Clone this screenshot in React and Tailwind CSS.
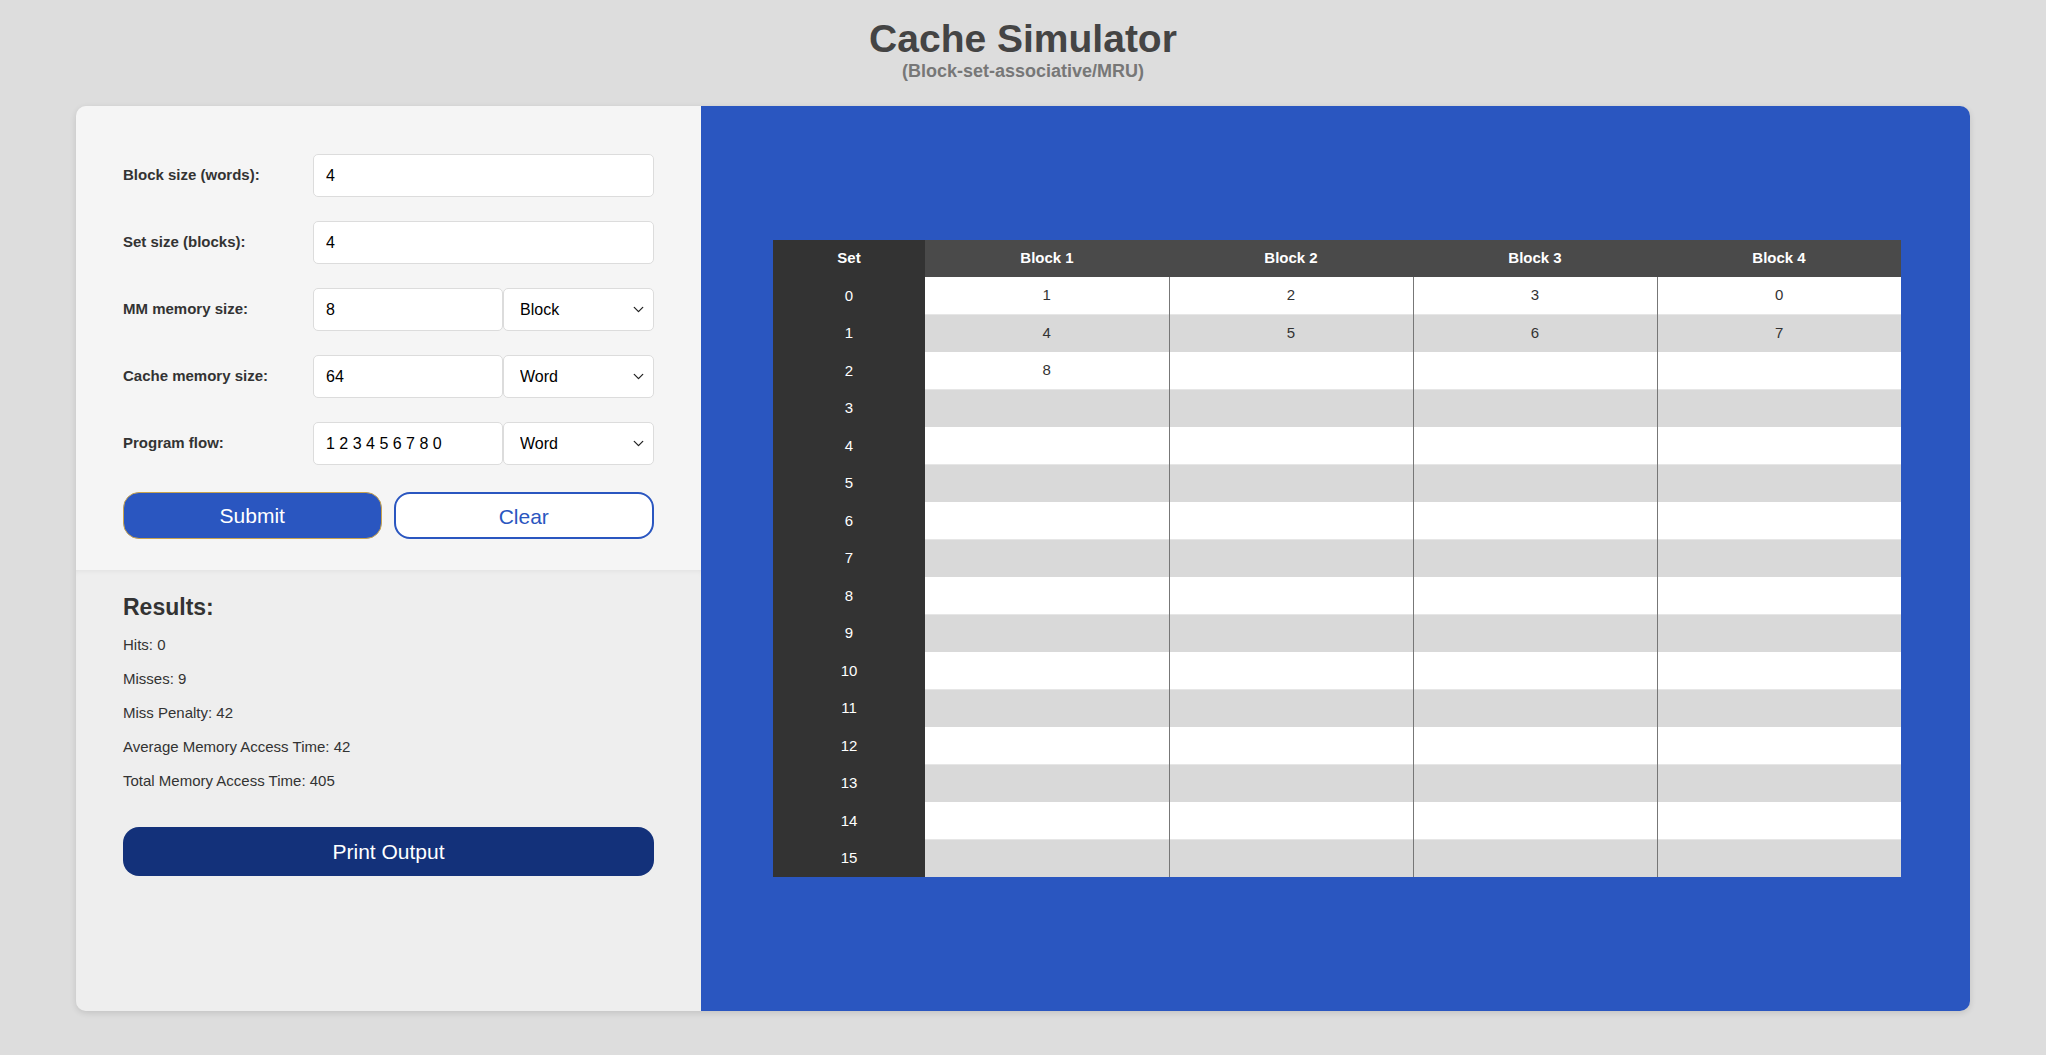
import { ChevronDown } from 'lucide-react';

const fields = [
  { label: 'Block size (words):', value: '4' },
  { label: 'Set size (blocks):', value: '4' },
  { label: 'MM memory size:', value: '8', unit: 'Block' },
  { label: 'Cache memory size:', value: '64', unit: 'Word' },
  { label: 'Program flow:', value: '1 2 3 4 5 6 7 8 0', unit: 'Word' },
];

const results = [
  'Hits: 0',
  'Misses: 9',
  'Miss Penalty: 42',
  'Average Memory Access Time: 42',
  'Total Memory Access Time: 405',
];

// cache contents per set (MRU placement)
const cache = [
  ['1', '2', '3', '0'],
  ['4', '5', '6', '7'],
  ['8', '', '', ''],
];

function Field({ label, value, unit }) {
  return (
    <div className="flex items-center h-[43px]">
      <label className="w-[190px] shrink-0 text-[15px] font-bold text-[#333]">{label}</label>
      <div className="flex flex-1 h-full">
        <input
          readOnly
          value={value}
          className={`h-full ${unit ? 'w-[190px]' : 'flex-1'} bg-white border border-[#dcdcdc] rounded-[5px] px-[12px] text-[16px] text-black outline-none`}
        />
        {unit && (
          <div className="relative flex-1 h-full">
            <select
              defaultValue={unit}
              className="appearance-none w-full h-full bg-white border border-[#dcdcdc] rounded-[5px] pl-[16px] text-[16px] text-black outline-none"
            >
              <option>Block</option>
              <option>Word</option>
            </select>
            <ChevronDown size={17} strokeWidth={1.8} className="absolute right-[7px] top-[13px] text-[#222] pointer-events-none" />
          </div>
        )}
      </div>
    </div>
  );
}

export default function App() {
  const rows = Array.from({ length: 16 }, (_, i) => cache[i] || ['', '', '', '']);

  return (
    <div className="min-h-screen bg-[#dddddd] font-['Liberation_Sans',Arial,sans-serif] pb-[44px]">
      <div className="pt-[19px] text-center">
        <h1 className="text-[39px] leading-none font-bold text-[#444]">Cache Simulator</h1>
        <p className="mt-[4px] text-[18px] leading-none font-bold text-[#777]">(Block-set-associative/MRU)</p>
      </div>

      <div className="mx-[76px] mt-[26px] h-[905px] flex rounded-[10px] overflow-hidden shadow-[0_2px_6px_rgba(0,0,0,0.12)]">
        <div className="w-[625px] flex flex-col">
          <div className="h-[464px] bg-[#f5f5f5] px-[47px] pt-[48px]">
            <div className="flex flex-col gap-[24px]">
              {fields.map(f => (
                <Field key={f.label} {...f} />
              ))}
            </div>
            <div className="mt-[27px] flex gap-[12px]">
              <button className="flex-1 h-[47px] rounded-[16px] bg-[#2a56c0] border border-[#c8a34e] text-white text-[21px]">
                Submit
              </button>
              <button className="flex-1 h-[47px] rounded-[16px] bg-white border-2 border-[#2a56c0] text-[#2a56c0] text-[21px] pt-[3px]">
                Clear
              </button>
            </div>
          </div>

          <div className="flex-1 bg-[#eeeeee] px-[47px] pt-[22px] shadow-[inset_0_4px_6px_-4px_rgba(0,0,0,0.08)]">
            <h3 className="text-[23px] leading-[30px] font-bold text-[#333]">Results:</h3>
            <div className="mt-[6px]">
              {results.map(r => (
                <p key={r} className="text-[15px] leading-[34px] text-[#333]">{r}</p>
              ))}
            </div>
            <button className="mt-[29px] w-full h-[49px] rounded-[16px] bg-[#13317a] text-white text-[21px]">
              Print Output
            </button>
          </div>
        </div>

        <div className="flex-1 bg-[#2a56c0] flex items-center pl-[72px] pr-[69px]">
          <table className="w-full border-collapse table-fixed text-[15px]">
            <thead>
              <tr className="h-[37px]">
                <th className="w-[152px] bg-[#333] text-white font-bold">Set</th>
                {[1, 2, 3, 4].map(n => (
                  <th key={n} className="bg-[#4a4a4a] text-white font-bold">Block {n}</th>
                ))}
              </tr>
            </thead>
            <tbody>
              {rows.map((row, i) => (
                <tr key={i} className="h-[37.5px]">
                  <td className="bg-[#333] text-white text-center">{i}</td>
                  {row.map((v, j) => (
                    <td
                      key={j}
                      className={`text-center text-[#333] ${i % 2 ? 'bg-[#d9d9d9] border-t border-t-[#e6e6e6]' : 'bg-white'} ${j > 0 ? 'border-l border-l-[#777]' : ''}`}
                    >
                      {v}
                    </td>
                  ))}
                </tr>
              ))}
            </tbody>
          </table>
        </div>
      </div>
    </div>
  );
}
